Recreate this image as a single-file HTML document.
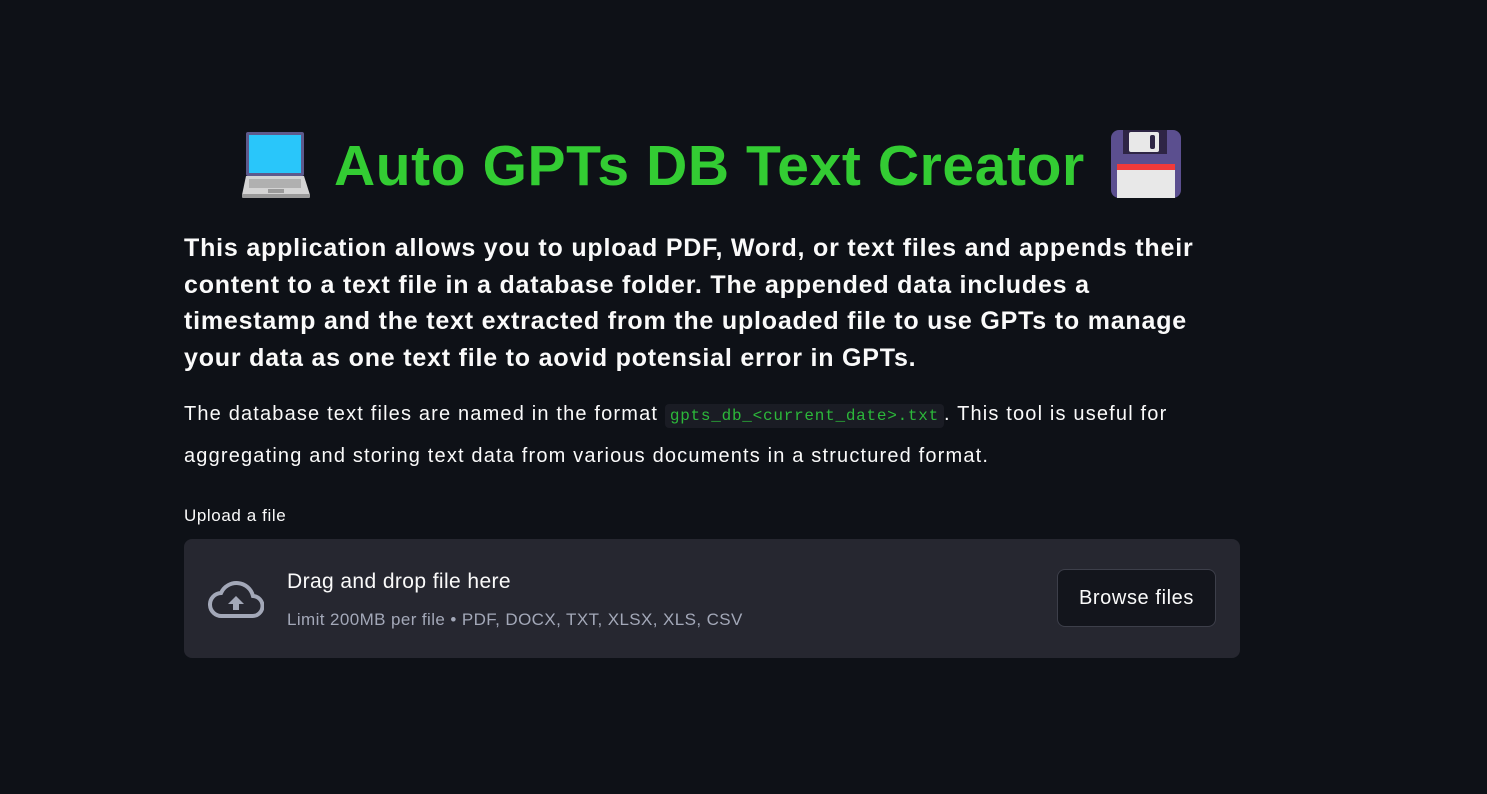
<!DOCTYPE html>
<html><head><meta charset="utf-8"><style>
body{margin:0;background:#0e1117;width:1487px;height:794px;overflow:hidden;font-family:"Liberation Sans",sans-serif;color:#fafafa;position:relative}
.a{position:absolute;white-space:nowrap}
h1{position:absolute;left:334px;top:124px;margin:0;font-size:57px;font-weight:bold;color:#33cc33;line-height:84px;white-space:nowrap;letter-spacing:0.6px}
.b{font-weight:bold;font-size:25px;line-height:36.5px;left:184px;top:230px;letter-spacing:0.8px}
.p{font-size:20px;line-height:40px;left:184px;top:394px;letter-spacing:1.17px}
code{font-family:"Liberation Mono",monospace;font-size:16px;letter-spacing:0.75px;color:#2cb83a;background:#1a1c24;padding:3px 5px;border-radius:4px}
.drop{position:absolute;left:184px;top:539px;width:1056px;height:119px;background:#262730;border-radius:8px}
.btn{position:absolute;left:873px;top:30px;width:157px;height:56px;border:1px solid #3d3f4a;border-radius:8px;background:#13151c;font-size:20px;line-height:56px;text-align:center;letter-spacing:0.6px}
</style></head><body>
<svg class="a" style="left:242px;top:132px" width="68" height="66" viewBox="0 0 68 66">
<rect x="4" y="0" width="58" height="44" rx="2" fill="#5e5a8c"/><rect x="7" y="3" width="52" height="38" fill="#29c6fa"/>
<path d="M4 44 H62 L68 63 H0 Z" fill="#d4d4d4"/><rect x="0" y="62" width="68" height="4" rx="1" fill="#9a9a9a"/>
<rect x="7" y="47" width="52" height="9" fill="#b0b0b0"/><rect x="26" y="57" width="16" height="4" fill="#9a9a9a"/>
</svg>
<h1>Auto GPTs DB Text Creator</h1>
<svg class="a" style="left:1111px;top:130px" width="70" height="68" viewBox="0 0 70 68">
<rect x="0" y="0" width="70" height="68" rx="8" fill="#5b4f8f"/><rect x="12" y="0" width="44" height="24" fill="#2e2545"/>
<rect x="18" y="2" width="30" height="20" rx="2" fill="#e8e8e8"/><rect x="39" y="5" width="5" height="14" rx="2" fill="#2e2545"/>
<rect x="6" y="34" width="58" height="34" fill="#e8e8e8"/><rect x="6" y="34" width="58" height="6" fill="#f03a3a"/>
</svg>
<div class="a b">This application allows you to upload PDF, Word, or text files and appends their<br>content to a text file in a database folder. The appended data includes a<br>timestamp and the text extracted from the uploaded file to use GPTs to manage<br>your data as one text file to aovid potensial error in GPTs.</div>
<div class="a p">The database text files are named in the format <code>gpts_db_&lt;current_date&gt;.txt</code>. This tool is useful for<br>aggregating and storing text data from various documents in a structured format.</div>
<div class="a" style="left:184px;top:506px;font-size:17px;letter-spacing:0.6px">Upload a file</div>
<div class="drop">
<svg class="a" style="left:24px;top:40px" width="56" height="40" viewBox="0 0 56 40"><path d="M14 37 H44 A10 10 0 0 0 45 17 A17 17 0 0 0 13 14 A11.5 11.5 0 0 0 14 37 Z" fill="none" stroke="#a3a8b8" stroke-width="4"/><path d="M28 17 L20 25 H25 V31 H31 V25 H36 Z" fill="#a3a8b8"/></svg>
<div class="a" style="left:103px;top:31px;font-size:21px;letter-spacing:0.4px">Drag and drop file here</div>
<div class="a" style="left:103px;top:71px;font-size:17px;color:#a3a8b8;letter-spacing:0.4px">Limit 200MB per file • PDF, DOCX, TXT, XLSX, XLS, CSV</div>
<div class="btn">Browse files</div>
</div>
</body></html>
